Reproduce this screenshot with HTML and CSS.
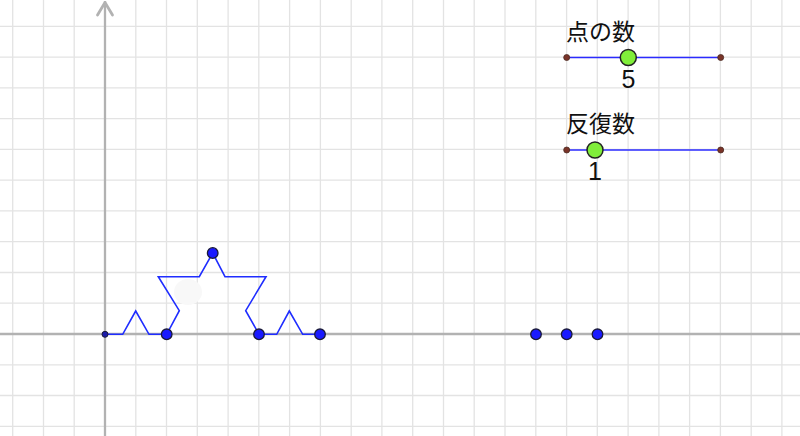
FILE: index.html
```html
<!DOCTYPE html>
<html lang="ja">
<head>
<meta charset="utf-8">
<title>コッホ曲線</title>
<link rel="stylesheet" href="styles.css">
</head>
<body>
<div class="canvas">
<svg class="board" width="800" height="436" viewBox="0 0 800 436" xmlns="http://www.w3.org/2000/svg">
  <g class="grid">
    <line x1="12.7" y1="0" x2="12.7" y2="436"/>
    <line x1="43.5" y1="0" x2="43.5" y2="436"/>
    <line x1="74.2" y1="0" x2="74.2" y2="436"/>
    <line x1="135.8" y1="0" x2="135.8" y2="436"/>
    <line x1="166.5" y1="0" x2="166.5" y2="436"/>
    <line x1="197.3" y1="0" x2="197.3" y2="436"/>
    <line x1="228.1" y1="0" x2="228.1" y2="436"/>
    <line x1="258.8" y1="0" x2="258.8" y2="436"/>
    <line x1="289.6" y1="0" x2="289.6" y2="436"/>
    <line x1="320.4" y1="0" x2="320.4" y2="436"/>
    <line x1="351.2" y1="0" x2="351.2" y2="436"/>
    <line x1="381.9" y1="0" x2="381.9" y2="436"/>
    <line x1="412.7" y1="0" x2="412.7" y2="436"/>
    <line x1="443.5" y1="0" x2="443.5" y2="436"/>
    <line x1="474.2" y1="0" x2="474.2" y2="436"/>
    <line x1="505" y1="0" x2="505" y2="436"/>
    <line x1="535.8" y1="0" x2="535.8" y2="436"/>
    <line x1="566.6" y1="0" x2="566.6" y2="436"/>
    <line x1="597.3" y1="0" x2="597.3" y2="436"/>
    <line x1="628.1" y1="0" x2="628.1" y2="436"/>
    <line x1="658.9" y1="0" x2="658.9" y2="436"/>
    <line x1="689.6" y1="0" x2="689.6" y2="436"/>
    <line x1="720.4" y1="0" x2="720.4" y2="436"/>
    <line x1="751.2" y1="0" x2="751.2" y2="436"/>
    <line x1="781.9" y1="0" x2="781.9" y2="436"/>
    <line x1="0" y1="26.3" x2="800" y2="26.3"/>
    <line x1="0" y1="57.1" x2="800" y2="57.1"/>
    <line x1="0" y1="87.8" x2="800" y2="87.8"/>
    <line x1="0" y1="118.6" x2="800" y2="118.6"/>
    <line x1="0" y1="149.4" x2="800" y2="149.4"/>
    <line x1="0" y1="180.2" x2="800" y2="180.2"/>
    <line x1="0" y1="210.9" x2="800" y2="210.9"/>
    <line x1="0" y1="241.7" x2="800" y2="241.7"/>
    <line x1="0" y1="272.5" x2="800" y2="272.5"/>
    <line x1="0" y1="303.2" x2="800" y2="303.2"/>
    <line x1="0" y1="364.8" x2="800" y2="364.8"/>
    <line x1="0" y1="395.5" x2="800" y2="395.5"/>
    <line x1="0" y1="426.3" x2="800" y2="426.3"/>
  </g>

  <ellipse class="haze" cx="188" cy="292" rx="14" ry="13"/>

  <g class="axes">
    <line x1="0" y1="334" x2="800" y2="334"/>
    <line x1="105" y1="1" x2="105" y2="436"/>
    <polyline class="arrow" points="97.5,15 105,2.5 112.5,15"/>
  </g>

  <polyline class="curve" points="105,334.3 122.7,334.3 135.7,311 149,334.3 166.7,334.3 179.3,310.7 158.3,276.7 199.3,276.7 212.7,253 225,276.7 266,276.7 245.7,310.7 259,334.3 276.7,334.3 289.3,311 302.7,334.3 320,334.3"/>

  <circle class="pt-small" cx="105" cy="334.3" r="3"/>
  <circle class="pt" cx="166.7" cy="334.3" r="5.3"/>
  <circle class="pt" cx="212.7" cy="253" r="5.3"/>
  <circle class="pt" cx="259" cy="334.3" r="5.3"/>
  <circle class="pt" cx="320" cy="334.3" r="5.3"/>

  <circle class="pt" cx="536" cy="334.3" r="5.3"/>
  <circle class="pt" cx="566.7" cy="334.3" r="5.3"/>
  <circle class="pt" cx="597.5" cy="334.3" r="5.3"/>

  <g class="slider">
    <text class="label" x="566" y="40">点の数</text>
    <line class="track" x1="566.7" y1="57.5" x2="720.7" y2="57.5"/>
    <circle class="end" cx="566.7" cy="57.5" r="3"/>
    <circle class="end" cx="720.7" cy="57.5" r="3"/>
    <circle class="knob" cx="628.3" cy="57.5" r="8"/>
    <text class="value" x="628.5" y="88.3">5</text>
  </g>

  <g class="slider">
    <text class="label" x="566" y="132">反復数</text>
    <line class="track" x1="566.7" y1="150" x2="720.7" y2="150"/>
    <circle class="end" cx="566.7" cy="150" r="3"/>
    <circle class="end" cx="720.7" cy="150" r="3"/>
    <circle class="knob" cx="595" cy="150" r="8"/>
    <text class="value" x="595" y="180">1</text>
  </g>
</svg>
</div>
</body>
</html>
```
FILE: styles.css
```css
html, body {
  margin: 0;
  padding: 0;
  background: #ffffff;
}

.canvas {
  width: 800px;
  height: 436px;
  overflow: hidden;
  background: #ffffff;
}

.board {
  display: block;
}

.grid line {
  stroke: #e3e3e3;
  stroke-width: 1.3;
}

.haze {
  fill: #f8f8f8;
}

.axes line {
  stroke: #b2b2b2;
  stroke-width: 2.3;
}

.axes .arrow {
  fill: none;
  stroke: #b2b2b2;
  stroke-width: 2.8;
  stroke-linecap: round;
  stroke-linejoin: round;
}

.curve {
  fill: none;
  stroke: #1f2dff;
  stroke-width: 1.6;
  stroke-linejoin: miter;
}

.pt {
  fill: #1a1aff;
  stroke: #1a1a3a;
  stroke-width: 1.3;
}

.pt-small {
  fill: #1c1ca8;
  stroke: #1a1a3a;
  stroke-width: 1;
}

.track {
  stroke: #2b2bff;
  stroke-width: 1.5;
}

.end {
  fill: #7a3428;
  stroke: #4a2a22;
  stroke-width: 0.8;
}

.knob {
  fill: #80ee3a;
  stroke: #222222;
  stroke-width: 1.5;
}

.label {
  font-family: "Noto Sans CJK JP", "Liberation Sans", sans-serif;
  font-size: 23px;
  fill: #111111;
}

.value {
  font-family: "Liberation Sans", "Noto Sans CJK JP", sans-serif;
  font-size: 25px;
  fill: #111111;
  text-anchor: middle;
}
```
